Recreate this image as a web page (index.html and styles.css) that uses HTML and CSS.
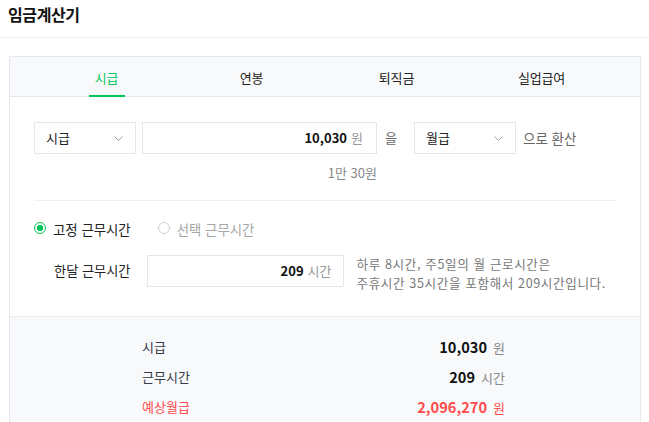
FILE: index.html
```html
<!DOCTYPE html>
<html lang="ko">
<head>
<meta charset="utf-8">
<title>임금계산기</title>
<link rel="stylesheet" href="styles.css">
</head>
<body>
<header class="page-header">
  <h1 class="page-title">임금계산기</h1>
</header>
<main class="page-main">
  <section class="card">
    <nav class="tabs">
      <a class="tab tab-active">시급</a>
      <a class="tab">연봉</a>
      <a class="tab">퇴직금</a>
      <a class="tab">실업급여</a>
    </nav>
    <div class="card-body">
      <div class="convert-row">
        <div class="select">
          <span>시급</span>
          <svg class="chev" width="9" height="5" viewBox="0 0 9 5"><polyline points="0.5,0.5 4.5,4.5 8.5,0.5" fill="none" stroke="#9a9ea5" stroke-width="1"/></svg>
        </div>
        <div class="field field-wide"><b class="num">10,030</b><span class="unit">원</span></div>
        <span class="particle">을</span>
        <div class="select">
          <span>월급</span>
          <svg class="chev" width="9" height="5" viewBox="0 0 9 5"><polyline points="0.5,0.5 4.5,4.5 8.5,0.5" fill="none" stroke="#9a9ea5" stroke-width="1"/></svg>
        </div>
        <span class="suffix">으로 환산</span>
      </div>
      <div class="korean-amount">1만 30원</div>
      <hr class="sep">
      <div class="radio-row">
        <label class="radio radio-on"><span class="dot"></span>고정 근무시간</label>
        <label class="radio"><span class="dot"></span>선택 근무시간</label>
      </div>
      <div class="hours-row">
        <span class="hours-label">한달 근무시간</span>
        <div class="field field-hours"><b class="num">209</b><span class="unit">시간</span></div>
        <div class="help">
          <p class="help-line">하루 8시간, 주5일의 월 근로시간은</p>
          <p class="help-line">주휴시간 35시간을 포함해서 209시간입니다.</p>
        </div>
      </div>
    </div>
    <div class="result">
      <div class="result-row"><span class="r-label">시급</span><span class="r-value"><b>10,030</b><span class="r-unit">원</span></span></div>
      <div class="result-row"><span class="r-label">근무시간</span><span class="r-value"><b>209</b><span class="r-unit">시간</span></span></div>
      <div class="result-row result-total"><span class="r-label">예상월급</span><span class="r-value"><b>2,096,270</b><span class="r-unit">원</span></span></div>
    </div>
  </section>
</main>
</body>
</html>
```

FILE: styles.css
```css
* { box-sizing: border-box; }
html, body { margin: 0; padding: 0; background: #fff; }
body {
  font-family: "Noto Sans CJK KR", "Noto Sans", sans-serif;
  font-size: 13px;
  color: #333;
}
.page-header {
  height: 38px;
  padding: 4px 8px 0;
  border-bottom: 1px solid #eeeff1;
}
.page-title {
  margin: 0;
  font-size: 16px;
  line-height: 20px;
  font-weight: 700;
  color: #111;
  letter-spacing: -0.4px;
}
.page-main { padding: 18px 8px 0 9px; }
.card {
  border: 1px solid #e6e8ec;
  border-bottom: none;
}
.tabs {
  display: flex;
  height: 40px;
  padding: 0 24px;
  background: #f8f9fb;
  border-bottom: 1px solid #e6e8ec;
}
.tab {
  position: relative;
  width: 145px;
  text-align: center;
  line-height: 42px;
  font-size: 13px;
  color: #222;
  letter-spacing: -0.2px;
}
.tab-active { color: #03c75a; }
.tab-active::after {
  content: "";
  position: absolute;
  left: 50%;
  bottom: -1px;
  width: 36px;
  height: 2px;
  margin-left: -18px;
  background: #03c75a;
}
.card-body { padding: 25px 24px 24px 24px; }
.convert-row {
  display: flex;
  align-items: center;
  height: 32px;
}
.select {
  display: flex;
  align-items: center;
  justify-content: space-between;
  width: 102px;
  height: 32px;
  padding: 0 12px 0 11px;
  border: 1px solid #e3e6ea;
  color: #222;
  line-height: 30px;
}
.chev { display: block; margin-top: 1px; }
.field {
  display: flex;
  align-items: center;
  justify-content: flex-end;
  height: 32px;
  border: 1px solid #e3e6ea;
  line-height: 30px;
  color: #111;
}
.field-wide { width: 235px; margin-left: 6px; padding-right: 13px; }
.num { font-weight: 700; }
.unit { color: #999; margin-left: 4px; }
.particle { margin: 0 17px 0 8px; color: #666; line-height: 20px; }
.suffix { margin-left: 7px; color: #666; line-height: 20px; font-size: 13.5px; }
.korean-amount {
  width: 343px;
  margin-top: 9px;
  line-height: 20px;
  text-align: right;
  color: #888;
}
.sep {
  margin: 17px 0 0;
  border: none;
  border-top: 1px solid #eef0f3;
  height: 0;
}
.radio-row {
  display: flex;
  margin-top: 18px;
  line-height: 20px;
  font-size: 13.4px;
}
.radio {
  display: flex;
  align-items: center;
  color: #a6a6a6;
  margin-right: 27px;
}
.radio-on { color: #222; }
.dot {
  width: 12px;
  height: 12px;
  border-radius: 50%;
  border: 1px solid #cfd2d6;
  margin-right: 7px;
  margin-top: -2px;
  background: #fff;
}
.radio-on .dot {
  border-color: #03c75a;
  background: radial-gradient(circle, #03c75a 0 3px, #fff 3.5px);
}
.hours-row {
  display: flex;
  align-items: flex-start;
  margin-top: 16px;
}
.hours-label {
  padding-left: 20px;
  line-height: 32px;
  color: #222;
  margin-right: 16px;
  font-size: 13.2px;
}
.field-hours { width: 197px; padding-right: 11px; }
.help {
  margin-left: 13px;
  color: #777;
  font-size: 12.6px;
  letter-spacing: 0.6px;
}
.help-line {
  margin: 0;
  height: 18.5px;
  line-height: 18.5px;
  white-space: nowrap;
}
.result {
  background: #f8f9fb;
  border-top: 1px solid #eceef1;
  padding: 15px 0 40px 132px;
}
.result-row {
  display: flex;
  justify-content: space-between;
  width: 363px;
  height: 30px;
  line-height: 30px;
  color: #333a45;
}
.r-value b {
  font-size: 14.6px;
  font-weight: 700;
  color: #111;
}
.r-unit { margin-left: 6px; color: #888; }
.result-total .r-label,
.result-total .r-value b,
.result-total .r-unit { color: #ff4b4b; }
```
